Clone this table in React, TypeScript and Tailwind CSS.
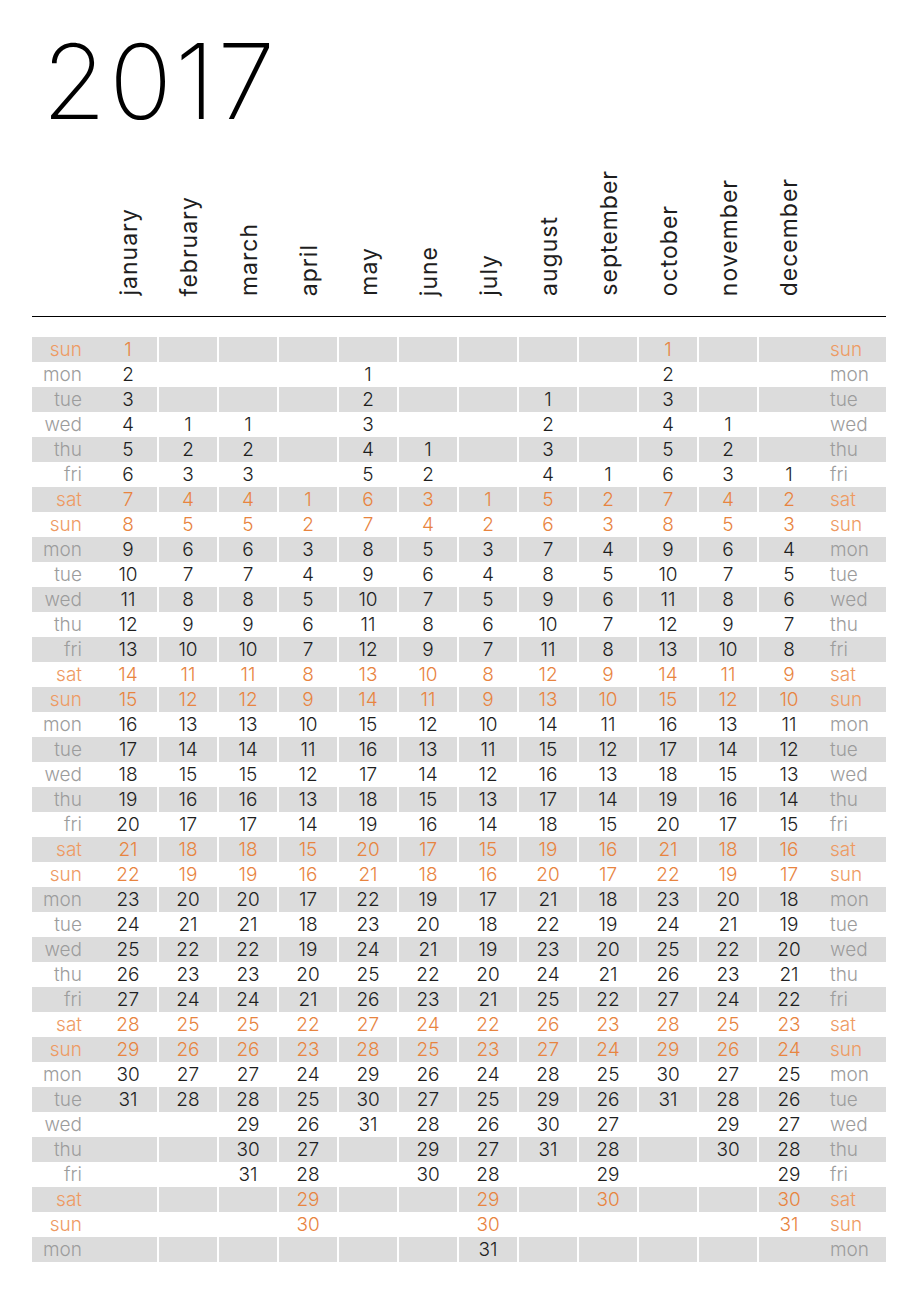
const months = [
  { name: "january", start: 0, days: 31 },
  { name: "february", start: 3, days: 28 },
  { name: "march", start: 3, days: 31 },
  { name: "april", start: 6, days: 30 },
  { name: "may", start: 1, days: 31 },
  { name: "june", start: 4, days: 30 },
  { name: "july", start: 6, days: 31 },
  { name: "august", start: 2, days: 31 },
  { name: "september", start: 5, days: 30 },
  { name: "october", start: 0, days: 31 },
  { name: "november", start: 3, days: 30 },
  { name: "december", start: 5, days: 31 },
];

const weekdays = ["sun", "mon", "tue", "wed", "thu", "fri", "sat"];

const rows = Array.from({ length: 37 }, (_, i) => i);

export default function App() {
  return (
    <div className="w-[918px] h-[1300px] bg-white font-['Inter','Liberation_Sans',sans-serif] text-[#1e1e1e]">
      <div className="pl-[42px] pt-[29px] text-[104px] font-extralight leading-none tracking-[3px] text-black">
        2017
      </div>

      <div className="mx-[32px] mt-[30px] flex h-[153px] items-end pb-[20px]">
        <div className="w-[67px]" />
        {months.map((m) => (
          <div key={m.name} className="flex w-[60px] justify-center">
            <span className="rotate-180 text-[23px] leading-none tracking-[1px] [writing-mode:vertical-rl]">{m.name}</span>
          </div>
        ))}
      </div>
      <div className="mx-[32px] border-t border-black" />

      <div className="mx-[32px] mt-[20px]">
        {rows.map((r) => {
          const wd = r % 7;
          const weekend = wd === 0 || wd === 6;
          const gray = r % 2 === 0;
          const labelColor = weekend ? "text-[#ee9a62]" : "text-[#9c9c9c]";
          return (
            <div key={r} className={`flex h-[25px] items-center text-[19px] font-light leading-none ${gray ? "bg-[#dcdcdc]" : "bg-white"}`}>
              <div className={`w-[67px] pr-[17px] text-right ${labelColor}`}>{weekdays[wd]}</div>
              {months.map((m, i) => {
                const d = r - m.start + 1;
                const show = d >= 1 && d <= m.days;
                return (
                  <div
                    key={m.name}
                    className={`flex h-full w-[60px] items-center justify-center ${i < 11 ? "border-r-2 border-white" : ""} ${weekend ? "text-[#e8843f]" : "text-[#1e1e1e]"}`}
                  >
                    {show ? d : ""}
                  </div>
                );
              })}
              <div className={`w-[67px] pl-[11px] ${labelColor}`}>{weekdays[wd]}</div>
            </div>
          );
        })}
      </div>
    </div>
  );
}
